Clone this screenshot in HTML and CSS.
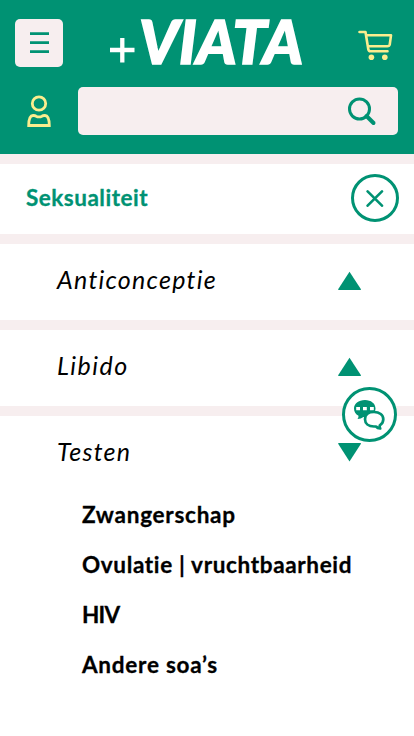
FILE: index.html
```html
<!DOCTYPE html>
<html lang="nl">
<head>
<meta charset="utf-8">
<meta name="viewport" content="width=device-width, initial-scale=1">
<title>Viata</title>
<link rel="stylesheet" href="styles.css">
</head>
<body>
<header class="header">
  <div class="top">
    <button class="menu" aria-label="Menu"><svg width="48" height="48" viewBox="0 0 48 48"><path d="M15 14.6h19M15 23.6h19M15 32.6h19" stroke="#009273" stroke-width="2.8"/></svg></button>
    <svg class="logo" width="200" height="60" viewBox="0 0 200 60"><path d="M2 37h24.5M14.3 25v24.5" stroke="#fff" stroke-width="4.3"/><text class="logo-text" x="31" y="51.2" textLength="164" lengthAdjust="spacingAndGlyphs">VIATA</text></svg>
    <svg class="cart" width="36" height="32" viewBox="0 0 36 32" fill="none" stroke="#fbed8e" stroke-width="2.6" stroke-linecap="round" stroke-linejoin="round"><path d="M1.5 3H7.5L10.3 20.2Q10.6 22.2 12.5 22.2H29.5M8 6.3H33L31.8 15.2Q31.4 17.2 29.3 17.2H10"/><g fill="#fbed8e" stroke="none"><circle cx="13.4" cy="28.2" r="2.8"/><circle cx="26.8" cy="28.2" r="2.8"/></g></svg>
  </div>
  <div class="tools">
    <svg class="user" width="24" height="34" viewBox="0 0 24 34" fill="none" stroke="#fbed8e" stroke-width="2.8"><circle cx="12" cy="9.5" r="6.7"/><path d="M1.7 31.5Q1.8 21.7 6 21.5Q8 21.4 9 22.2Q12 23.6 15 22.2Q16 21.4 18 21.5Q22.2 21.7 22.3 31.5Z" stroke-linejoin="miter"/></svg>
    <div class="search"><svg width="30" height="30" viewBox="0 0 30 30" fill="none" stroke="#009273"><circle cx="12.5" cy="12" r="10" stroke-width="3"/><path d="M19.5 19L26.5 26" stroke-width="4" stroke-linecap="round"/></svg></div>
  </div>
</header>
<main>
  <section class="title">
    <h1>Seksualiteit</h1>
    <button class="close" aria-label="Sluiten"><svg width="18" height="18" viewBox="0 0 18 18"><path d="M1.6 2.3L16 16.7M16 2.3L1.6 16.7" stroke="#009273" stroke-width="2.6" stroke-linecap="round"/></svg></button>
  </section>
  <section class="row"><h2 class="anti">Anticonceptie</h2><svg class="arrow" width="24" height="20" viewBox="0 0 24 20"><path d="M11.5 1.8L22.8 18.9Q23.3 20 22.5 20H.6Q-.2 20 .3 18.9Z"/></svg></section>
  <section class="row"><h2 class="libido">Libido</h2><svg class="arrow" width="24" height="20" viewBox="0 0 24 20"><path d="M11.5 1.8L22.8 18.9Q23.3 20 22.5 20H.6Q-.2 20 .3 18.9Z"/></svg></section>
  <section class="row"><h2 class="testen">Testen</h2><svg class="arrow" width="24" height="20" viewBox="0 0 24 20"><path d="M11.5 19.5L22.8 2.1Q23.3 1 22.5 1H.6Q-.2 1 .3 2.1Z"/></svg></section>
  <ul class="links">
    <li class="zwanger">Zwangerschap</li>
    <li class="ovulatie">Ovulatie | vruchtbaarheid</li>
    <li class="hiv">HIV</li>
    <li class="andere">Andere soa’s</li>
  </ul>
</main>
<button class="chat" aria-label="Chat"><svg width="34" height="34" viewBox="0 0 34 34"><path d="M13 3C6.4 3 2 6.7 2 11.5C2 14.6 3.6 17.2 6.5 18.7Q6.8 20.3 5.5 22Q9 21.8 11.5 20H13C19 20 23.5 16.5 23.5 11.5S19 3 13 3Z" fill="#009273"/><path d="M4.2 10h3.8v3.3H4.2zM11 10h3.8v3.3H11zM18 10h3.8v3.3H18z" fill="#fff"/><path d="M22 15C16.5 15 13 18 13 22.3S16.5 29.5 22 29.5H24Q25.5 31.2 28.2 31.5Q27.3 30 27.8 28.3Q31.3 26.3 31.3 22.3C31.3 18 27.5 15 22 15Z" fill="#fff" stroke="#009273" stroke-width="2.7" stroke-linejoin="round"/></svg></button>
</body>
</html>
```
FILE: styles.css
```css
* { box-sizing: border-box; }
body { margin: 0; height: 736px; overflow: hidden; background: #fff; color: #000; font-family: Lato, "Liberation Sans", sans-serif; font-variant-ligatures: none; }
button { padding: 0; border: 0; }
svg { display: block; flex: none; }
.header { height: 154px; padding: 15px 16px 0 15px; background: #009273; }
.top { display: flex; height: 72px; }
.menu { width: 48px; height: 48px; margin-top: 4px; border-radius: 5px; background: #f7eeef; }
.logo { margin: -2px 0 0 45px; overflow: visible; }
.logo-text { font-size: 60px; font-weight: 900; font-style: italic; fill: #fff; stroke: #fff; stroke-width: 1.6px; }
.cart { margin: 14px 0 0 50px; }
.tools { display: flex; }
.user { margin: 7px 0 0 12px; }
.search { display: flex; justify-content: flex-end; align-items: center; width: 320px; height: 48px; margin-left: 27px; padding-right: 21px; border-radius: 5px; background: #f7eeef; }
.search svg { margin-top: 1px; }
.title { display: flex; justify-content: space-between; align-items: center; height: 80px; padding: 0 15px 0 26px; border-top: 10px solid #f7eeef; }
h1, h2 { margin: 0; white-space: nowrap; }
h1 { margin-top: -3px; font-size: 22.5px; line-height: 28px; font-weight: 700; color: #009273; letter-spacing: .5px; -webkit-text-stroke: .3px; }
.close { display: flex; align-items: center; justify-content: center; width: 48px; height: 48px; margin-top: -2px; border: 3px solid #009273; border-radius: 50%; background: #fff; }
.row { display: flex; justify-content: space-between; height: 86px; padding: 20px 52px 0 57px; border-top: 10px solid #f7eeef; }
h2 { font-size: 25px; line-height: 30px; font-weight: 400; font-style: italic; letter-spacing: 1.25px; }
.libido { letter-spacing: 1.5px; }
.arrow { margin-top: 6px; fill: #009273; }
.links { margin: -2px 0 0; padding: 0 0 0 82px; list-style: none; font-size: 22.5px; line-height: 50px; font-weight: 700; letter-spacing: .65px; white-space: nowrap; -webkit-text-stroke: .3px; }
.zwanger, .andere { letter-spacing: .75px; }
.hiv { letter-spacing: -.8px; }
.chat { position: absolute; left: 342px; top: 387px; display: flex; align-items: center; justify-content: center; width: 55px; height: 55px; border: 3px solid #009273; border-radius: 50%; background: #fff; }
.chat svg { margin: -1px 0 0 -1px; }
```
